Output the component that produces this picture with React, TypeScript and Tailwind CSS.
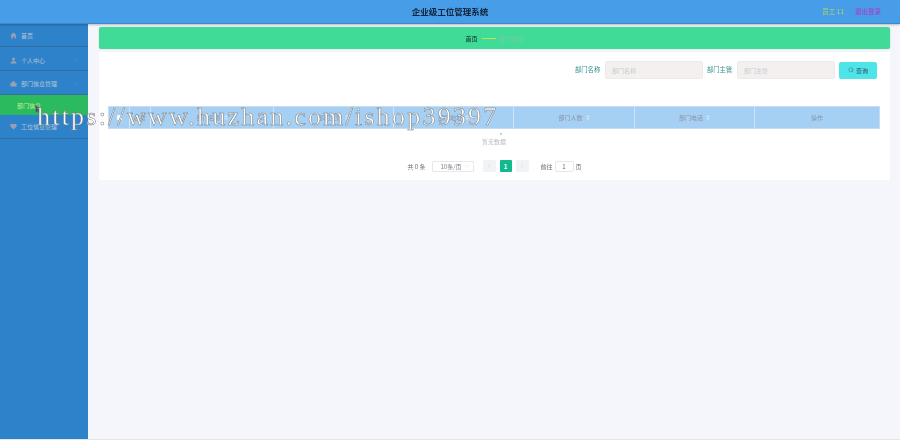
import { ChevronDown, ChevronUp, ChevronLeft, ChevronRight, Search } from "lucide-react";

const font = "font-['Noto_Sans_CJK_SC','Liberation_Sans',sans-serif]";

function Home() {
  return (
    <svg viewBox="0 0 16 16" className="h-[7px] w-[7px]" fill="#9a9fb0">
      <path d="M8 1 0.5 8h2.2v7h3.8v-4.5h3V15h3.8V8h2.2z" />
    </svg>
  );
}
function User() {
  return (
    <svg viewBox="0 0 16 16" className="h-[7px] w-[7px]" fill="#9a9fb0">
      <circle cx="8" cy="4.5" r="3.5" />
      <path d="M1 15c0-4 3-6 7-6s7 2 7 6z" />
    </svg>
  );
}
function Dept() {
  return (
    <svg viewBox="0 0 16 16" className="h-[7px] w-[7px]" fill="#9a9fb0">
      <path d="M1 15V6h4V3h6v3h4v9z" />
    </svg>
  );
}
function Shield() {
  return (
    <svg viewBox="0 0 16 16" className="h-[7px] w-[7px]" fill="#9a9fb0">
      <path d="M1 2h14v6l-7 7-7-7z" />
    </svg>
  );
}
function Sort() {
  return (
    <span className="ml-[3px] flex flex-col gap-[1px]">
      <span className="h-0 w-0 border-x-[2px] border-b-[2px] border-x-transparent border-b-[#d4e4f4]" />
      <span className="h-0 w-0 border-x-[2px] border-t-[2px] border-x-transparent border-t-[#d4e4f4]" />
    </span>
  );
}

function MenuRow({ icon, label, arrow, h }: { icon: React.ReactNode; label: string; arrow?: "up" | "down"; h: string }) {
  return (
    <div className={`flex items-center border-b border-[#33709f] pl-[10px] pr-[8px] text-[6px] text-[#b5c6d6] ${h}`}>
      <span className="mr-[4px] flex w-[7px]">{icon}</span>
      <span className="flex-1">{label}</span>
      {arrow === "down" && <ChevronDown size={7} strokeWidth={1} className="text-[#6fa5d3]" />}
      {arrow === "up" && <ChevronUp size={7} strokeWidth={1} className="text-[#6fa5d3]" />}
    </div>
  );
}

const cols: { w: string; label: string; sort?: boolean }[] = [
  { w: "w-[21px]", label: "" },
  { w: "w-[21px]", label: "序号" },
  { w: "w-[123px]", label: "部门名称", sort: true },
  { w: "w-[120px]", label: "部门主管", sort: true },
  { w: "w-[120px]", label: "部门地址", sort: true },
  { w: "w-[121px]", label: "部门人数", sort: true },
  { w: "w-[120px]", label: "部门电话", sort: true },
  { w: "flex-1", label: "操作" },
];

export default function App() {
  return (
    <div className={`relative h-[440px] w-[900px] overflow-hidden bg-[#f4f6fb] ${font}`}>
      <div className="flex h-full flex-col blur-[0.3px]">
        <header className="relative z-10 flex h-[24px] shrink-0 items-center justify-center border-b border-[#3d88c8] bg-[#479de8] shadow-[0_1px_2px_rgba(0,0,0,0.25)]">
          <span className="text-[8.5px] font-bold text-[#12233a]">企业级工位管理系统</span>
          <div className="absolute right-[19px] top-0 flex h-full items-center gap-[11px] text-[6.5px]">
            <span className="text-[#b9d84f]">员工 11</span>
            <span className="text-[#b534c0]">退出登录</span>
          </div>
        </header>

        <div className="flex min-h-0 flex-1 border-b border-[#e4e6ea]">
          <aside className="w-[88px] shrink-0 bg-[#2e82ca]">
            <MenuRow icon={<Home />} label="首页" h="h-[23px]" />
            <MenuRow icon={<User />} label="个人中心" arrow="down" h="h-[24px] pt-[3px]" />
            <MenuRow icon={<Dept />} label="部门信息管理" arrow="up" h="h-[24px] pt-[1px]" />
            <div className="flex h-[20px] items-center bg-[#2bbb5e] pl-[17px] text-[6px] text-[#c6ee8e]">部门信息</div>
            <MenuRow icon={<Shield />} label="工位信息管理" arrow="down" h="h-[24px]" />
          </aside>

          <main className="flex-1 pl-[11px] pr-[10px] pt-[3px]">
            <div className="flex h-[22px] items-center justify-center rounded-[2px] bg-[#3fdb97] text-[6px] shadow-[0_0_2px_rgba(0,0,0,0.15)]">
              <span className="font-medium text-[#16332a]">首页</span>
              <span className="mx-[4px] h-[1px] w-[14px] bg-[#c5e05a]" />
              <span className="text-[#7fc7ad]">部门信息</span>
            </div>

            <section className="mt-[3px] h-[128px] bg-white pl-[9px] pr-[10px] pt-[9px]">
              <div className="flex h-[18px] items-center justify-end gap-[4px] pr-[3px] text-[6.3px]">
                <span className="w-[26px] text-[#2f8f8f]">部门名称</span>
                <div className="flex h-[18px] w-[98px] items-center rounded-[2px] border border-[#eeeaea] bg-[#f4f0f0] pl-[6px] text-[6px] text-[#c8c8cc]">部门名称</div>
                <span className="w-[26px] text-[#2f8f8f]">部门主管</span>
                <div className="flex h-[18px] w-[98px] items-center rounded-[2px] border border-[#eeeaea] bg-[#f4f0f0] pl-[6px] text-[6px] text-[#c8c8cc]">部门主管</div>
                <div className="flex h-[17px] w-[38px] items-center justify-center gap-[2px] rounded-[2px] bg-[#4fe3ea] text-[6px] text-[#2d5560]">
                  <Search size={6} strokeWidth={1.5} />
                  查询
                </div>
              </div>

              <div className="mt-[27px] flex h-[23px] border border-[#c4ddf3] bg-[#a6d0f3] text-[6px] text-[#8a95a5]">
                {cols.map((c, i) => (
                  <div key={i} className={`flex items-center justify-center border-r border-[#cfe3f6] last:border-r-0 ${c.w}`}>
                    {i === 0 ? <span className="h-[5px] w-[5px] rounded-[1px] bg-white" /> : c.label}
                    {c.sort && <Sort />}
                  </div>
                ))}
              </div>

              <div className="flex flex-col items-center pt-[4px] text-[6px] text-[#bcbcc0]">
                <span className="ml-[14px] h-[2px] w-[2px] bg-[#9fe3d3]" />
                <span className="mt-[2px]">暂无数据</span>
              </div>

              <div className="mt-[14px] flex h-[12px] items-center justify-center pl-[1px] text-[6px] text-[#6a6d73]">
                <span>共 0 条</span>
                <div className="ml-[6px] flex h-[11px] w-[42px] items-center justify-between rounded-[1px] border border-[#e6e8ec] pl-[8px] pr-[3px] text-[#7a7d84]">
                  10条/页
                  <ChevronDown size={6} strokeWidth={1} className="text-[#bbb]" />
                </div>
                <div className="ml-[9px] flex h-[12px] w-[13px] items-center justify-center rounded-[1px] bg-[#f2f3f5] text-[#c3c5ca]">
                  <ChevronLeft size={6} strokeWidth={1.5} />
                </div>
                <div className="ml-[4px] flex h-[12px] w-[12px] items-center justify-center rounded-[1px] bg-[#12b98d] font-bold text-white">1</div>
                <div className="ml-[4px] flex h-[12px] w-[13px] items-center justify-center rounded-[1px] bg-[#f2f3f5] text-[#c3c5ca]">
                  <ChevronRight size={6} strokeWidth={1.5} />
                </div>
                <span className="ml-[12px]">前往</span>
                <div className="mx-[2px] flex h-[11px] w-[19px] items-center justify-center rounded-[2px] border border-[#e6e8ec]">1</div>
                <span>页</span>
              </div>
            </section>
          </main>
        </div>
      </div>

      <svg viewBox="0 0 10 14" className="absolute left-[35px] top-[105px] z-10 h-[10px] w-[7px]" fill="#4a5560">
        <path d="M1 0v11l3-2.5L6 13l2-1-2-4.5h4z" />
      </svg>

      <div className="pointer-events-none absolute left-[37px] top-[102px] z-20 whitespace-nowrap font-['Liberation_Serif',serif] text-[26px] leading-[30px] tracking-[2.22px] text-white [-webkit-text-stroke:0.5px_#777]">
        https://www.huzhan.com/ishop39397
      </div>
    </div>
  );
}
